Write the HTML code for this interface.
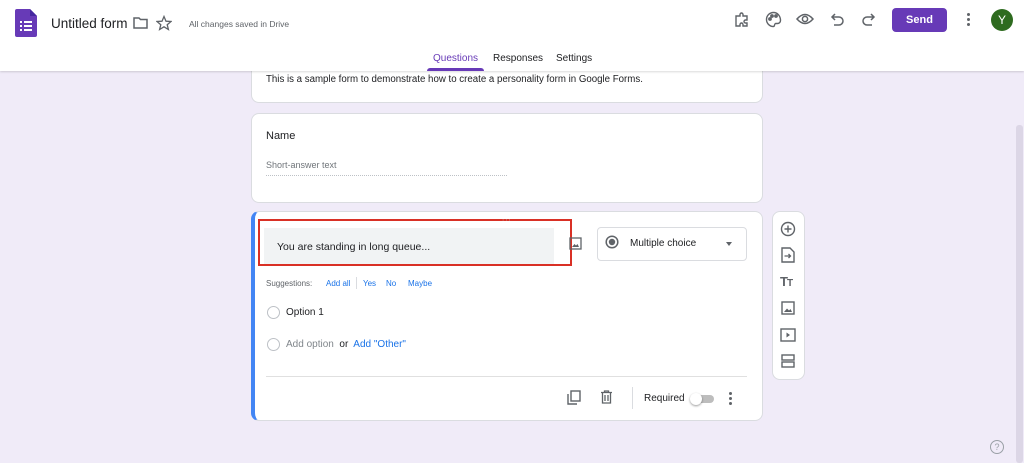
<!DOCTYPE html><html><head><style>
body{margin:0;width:1024px;height:463px;background:#f0ebf8;font-family:"Liberation Sans",sans-serif;position:relative;overflow:hidden}
.a{position:absolute}
.card{position:absolute;background:#fff;border-radius:8px;border:1px solid #dadce0;box-sizing:border-box}
.t{color:#202124}
.ic{position:absolute;fill:none;stroke:#5f6368;stroke-width:1.8}
</style></head><body>
<div class="a" style="left:0;top:0;width:1024px;height:71px;background:#fff;box-shadow:0 1px 2px rgba(0,0,0,.15)"></div>
<svg class="a" style="left:15px;top:9px" width="22" height="28"><path d="M0 2Q0 0 2 0H15L22 7V26Q22 28 20 28H2Q0 28 0 26Z" fill="#673ab7"/><path d="M15 0V7H22Z" fill="#4527a0"/><g fill="#fff"><rect x="5" y="12" width="2" height="2"/><rect x="9" y="12" width="8" height="2"/><rect x="5" y="16" width="2" height="2"/><rect x="9" y="16" width="8" height="2"/><rect x="5" y="20" width="2" height="2"/><rect x="9" y="20" width="8" height="2"/></g></svg>
<div class="a" style="left:51px;top:16px;font-size:13.5px;color:#202124">Untitled form</div>
<svg class="ic" style="left:133px;top:16px" width="15" height="13"><path d="M1 2H6L7.5 3.5H14V12H1Z" stroke-width="1.5"/></svg>
<svg class="ic" style="left:156px;top:15px" width="16" height="16"><path d="M8 1.5L10 6.2 15 6.5 11.2 9.7 12.4 14.5 8 11.8 3.6 14.5 4.8 9.7 1 6.5 6 6.2Z" stroke-width="1.3"/></svg>
<div class="a" style="left:189px;top:19px;font-size:8.5px;color:#5f6368">All changes saved in Drive</div>
<svg class="ic" style="left:734px;top:12px" width="16" height="16"><path d="M2 4H6V2.5A1.5 1.5 0 0 1 9 2.5V4H13V8H11.5A1.5 1.5 0 0 0 11.5 11H13V14H9V12.5A1.5 1.5 0 0 0 6 12.5V14H2Z" stroke-width="1.4"/></svg>
<svg class="ic" style="left:765px;top:11px" width="17" height="17"><path d="M8.5 1.5A7 7 0 0 0 8.5 15.5C10 15.5 9 13 10.5 12.5H12.5A3 3 0 0 0 15.5 9.5C15.5 5 12.5 1.5 8.5 1.5Z" stroke-width="1.4"/><circle cx="5" cy="8" r="1" fill="#5f6368"/><circle cx="7" cy="5" r="1" fill="#5f6368"/><circle cx="11" cy="5" r="1" fill="#5f6368"/></svg>
<svg class="ic" style="left:796px;top:12px" width="18" height="14"><path d="M1 7Q9 -2 17 7Q9 16 1 7Z" stroke-width="1.5"/><circle cx="9" cy="7" r="2.6" stroke-width="1.5"/></svg>
<svg class="ic" style="left:830px;top:12px" width="14" height="14"><path d="M2 5H9A4 4 0 0 1 9 13H4M5 2L2 5 5 8" stroke-width="1.5"/></svg>
<svg class="ic" style="left:862px;top:12px" width="14" height="14"><path d="M12 5H5A4 4 0 0 0 5 13H10M9 2L12 5 9 8" stroke-width="1.5"/></svg>
<div class="a" style="left:892px;top:8px;width:55px;height:24px;background:#673ab7;border-radius:4px;color:#fff;font-size:11px;font-weight:bold;text-align:center;line-height:24px">Send</div>
<div class="a" style="left:967px;top:13px;width:3px;height:3px;background:#5f6368;border-radius:50%;box-shadow:0 5px #5f6368,0 10px #5f6368"></div>
<div class="a" style="left:991px;top:9px;width:22px;height:22px;border-radius:50%;background:#2e6b1f;color:#fff;font-size:12px;text-align:center;line-height:22px">Y</div>
<div class="a" style="left:433px;top:53px;font-size:10px;color:#673ab7">Questions</div>
<div class="a" style="left:427px;top:68px;width:57px;height:3px;background:#673ab7;border-radius:3px 3px 0 0"></div>
<div class="a" style="left:493px;top:53px;font-size:10px;color:#202124">Responses</div>
<div class="a" style="left:556px;top:53px;font-size:10px;color:#202124">Settings</div>
<div class="card" style="left:251px;top:62px;width:512px;height:41px;border-top:none;z-index:-1"></div>
<div class="a t" style="left:266px;top:74px;font-size:9.7px">This is a sample form to demonstrate how to create a personality form in Google Forms.</div>
<div class="card" style="left:251px;top:113px;width:512px;height:90px"></div>
<div class="a t" style="left:266px;top:130px;font-size:11px">Name</div>
<div class="a" style="left:266px;top:160px;font-size:9px;color:#70757a">Short-answer text</div>
<div class="a" style="left:266px;top:175px;width:241px;border-top:1px dotted #bdc1c6"></div>
<div class="card" style="left:251px;top:211px;width:512px;height:210px;border-left:4px solid #4285f4"></div>
<div class="a" style="left:264px;top:228px;width:290px;height:36px;background:#f1f3f4;border-bottom:1px solid #80868b"></div>
<div class="a" style="left:258px;top:219px;width:310px;height:43px;border:2px solid #d93025"></div>
<div class="a t" style="left:277px;top:241px;font-size:10.5px">You are standing in long queue...</div>
<div class="a" style="left:502px;top:215px;font-size:8px;color:#bbb;letter-spacing:1px">∙∙∙</div>
<svg class="ic" style="left:569px;top:237px" width="13" height="13"><rect x="1" y="1" width="11" height="11" stroke-width="1.3"/><path d="M3 10L5.5 7 7 8.5 8.5 7 10 10Z" fill="#5f6368" stroke="none"/></svg>
<div class="a" style="left:597px;top:227px;width:148px;height:32px;border:1px solid #dadce0;border-radius:4px"></div>
<svg class="a" style="left:605px;top:235px" width="14" height="14"><circle cx="7" cy="7" r="5.8" fill="none" stroke="#5f6368" stroke-width="1.5"/><circle cx="7" cy="7" r="3.2" fill="#5f6368"/></svg>
<div class="a t" style="left:630px;top:238px;font-size:10px">Multiple choice</div>
<div class="a" style="left:726px;top:242px;border:3.5px solid transparent;border-top:4px solid #5f6368"></div>
<div class="a" style="left:266px;top:279px;font-size:8px;color:#5f6368">Suggestions:</div>
<div class="a" style="left:326px;top:279px;font-size:8px;color:#1a73e8">Add all</div>
<div class="a" style="left:356px;top:277px;height:12px;border-left:1px solid #dadce0"></div>
<div class="a" style="left:363px;top:279px;font-size:8px;color:#1a73e8">Yes</div>
<div class="a" style="left:386px;top:279px;font-size:8px;color:#1a73e8">No</div>
<div class="a" style="left:408px;top:279px;font-size:8px;color:#1a73e8">Maybe</div>
<div class="a" style="left:267px;top:306px;width:11px;height:11px;border:1.5px solid #bdc1c6;border-radius:50%"></div>
<div class="a t" style="left:286px;top:307px;font-size:10px">Option 1</div>
<div class="a" style="left:267px;top:338px;width:11px;height:11px;border:1.5px solid #bdc1c6;border-radius:50%"></div>
<div class="a" style="left:286px;top:339px;font-size:10px;color:#80868b">Add option <span style="color:#202124">&nbsp;or&nbsp;</span> <span style="color:#1a73e8">Add "Other"</span></div>
<div class="a" style="left:266px;top:376px;width:481px;border-top:1px solid #e0e0e0"></div>
<svg class="ic" style="left:567px;top:390px" width="14" height="15"><rect x="4" y="1" width="9" height="10" stroke-width="1.4"/><path d="M1 4V14H10" stroke-width="1.4"/></svg>
<svg class="ic" style="left:600px;top:390px" width="13" height="14"><path d="M1 2.5H12M4.5 2.5V1H8.5V2.5M2.5 2.5V13H10.5V2.5M5 5V11M8 5V11" stroke-width="1.3"/></svg>
<div class="a" style="left:632px;top:387px;height:22px;border-left:1px solid #dadce0"></div>
<div class="a t" style="left:644px;top:393px;font-size:10px">Required</div>
<div class="a" style="left:694px;top:395px;width:20px;height:8px;background:#bdbdbd;border-radius:4px"></div>
<div class="a" style="left:690px;top:393px;width:12px;height:12px;background:#fff;border-radius:50%;box-shadow:0 1px 2px rgba(0,0,0,.4)"></div>
<div class="a" style="left:729px;top:392px;width:3px;height:3px;background:#5f6368;border-radius:50%;box-shadow:0 5px #5f6368,0 10px #5f6368"></div>
<div class="card" style="left:772px;top:211px;width:33px;height:169px"></div>
<svg class="ic" style="left:780px;top:221px" width="16" height="16"><circle cx="8" cy="8" r="6.5" stroke-width="1.4"/><path d="M8 4.5V11.5M4.5 8H11.5" stroke-width="1.4"/></svg>
<svg class="ic" style="left:781px;top:247px" width="14" height="16"><path d="M1 1H9L13 5V15H1Z" stroke-width="1.4"/><path d="M3.5 9H9.5M7.5 7L9.5 9 7.5 11" stroke-width="1.3"/></svg>
<div class="a" style="left:780px;top:274px;font-size:13px;font-weight:bold;color:#5f6368;letter-spacing:-1px">T<span style="font-size:10px">T</span></div>
<svg class="ic" style="left:781px;top:301px" width="14" height="14"><rect x="1" y="1" width="12" height="12" stroke-width="1.4"/><path d="M3 11L6 7.5 8 9.5 9.5 8 11 11Z" fill="#5f6368" stroke="none"/></svg>
<svg class="ic" style="left:780px;top:328px" width="16" height="14"><rect x="1" y="1" width="14" height="12" stroke-width="1.4"/><path d="M6.5 4.5V9.5L10 7Z" fill="#5f6368" stroke="none"/></svg>
<svg class="ic" style="left:781px;top:354px" width="14" height="14"><rect x="1" y="1" width="12" height="5" stroke-width="1.4"/><rect x="1" y="8" width="12" height="5" stroke-width="1.4"/></svg>
<div class="a" style="left:1016px;top:125px;width:7px;height:338px;background:#dcd6e6;border-radius:3px"></div>
<div class="a" style="left:990px;top:440px;width:12px;height:12px;border:1.3px solid #9aa0a6;border-radius:50%;font-size:9px;color:#9aa0a6;text-align:center;line-height:12px">?</div>
</body></html>
